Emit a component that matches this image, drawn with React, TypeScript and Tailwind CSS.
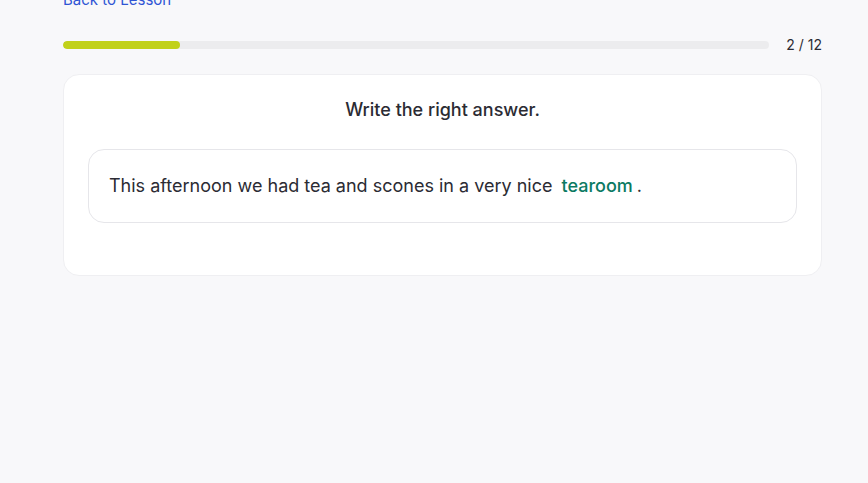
export default function App() {
  return (
    <main className="flex min-h-screen flex-col bg-[#f8f8fa] font-['Inter',sans-serif] text-[#2b2b33]">
      <div className="ml-[63px] mr-[46px] -mt-[10px]">
        <a href="#" className="block text-[15px] leading-5 text-[#2f55d4]">
          Back to Lesson
        </a>

        <div className="mt-[25px] flex items-center gap-[17px]">
          <div className="h-2 flex-1 overflow-hidden rounded-full bg-[#ececee]">
            <div className="h-full w-[16.6%] rounded-full bg-[#c1d11a]"></div>
          </div>
          <span className="text-[14px] leading-5 text-[#2b2b33]">2 / 12</span>
        </div>

        <div className="mt-[19px] rounded-2xl border border-[#efeff2] bg-white px-6 pt-[25px] pb-[52px]">
          <h2 className="text-center text-[18px] font-medium leading-5">Write the right answer.</h2>
          <div className="mt-[29px] rounded-2xl border border-[#e6e6ea] px-5 py-[25px] text-[18px] leading-[22px]">
            This afternoon we had tea and scones in a very nice{" "}
            <span className="mx-1 font-medium text-[#0b7a62]">tearoom</span>.
          </div>
        </div>
      </div>
    </main>
  )
}
